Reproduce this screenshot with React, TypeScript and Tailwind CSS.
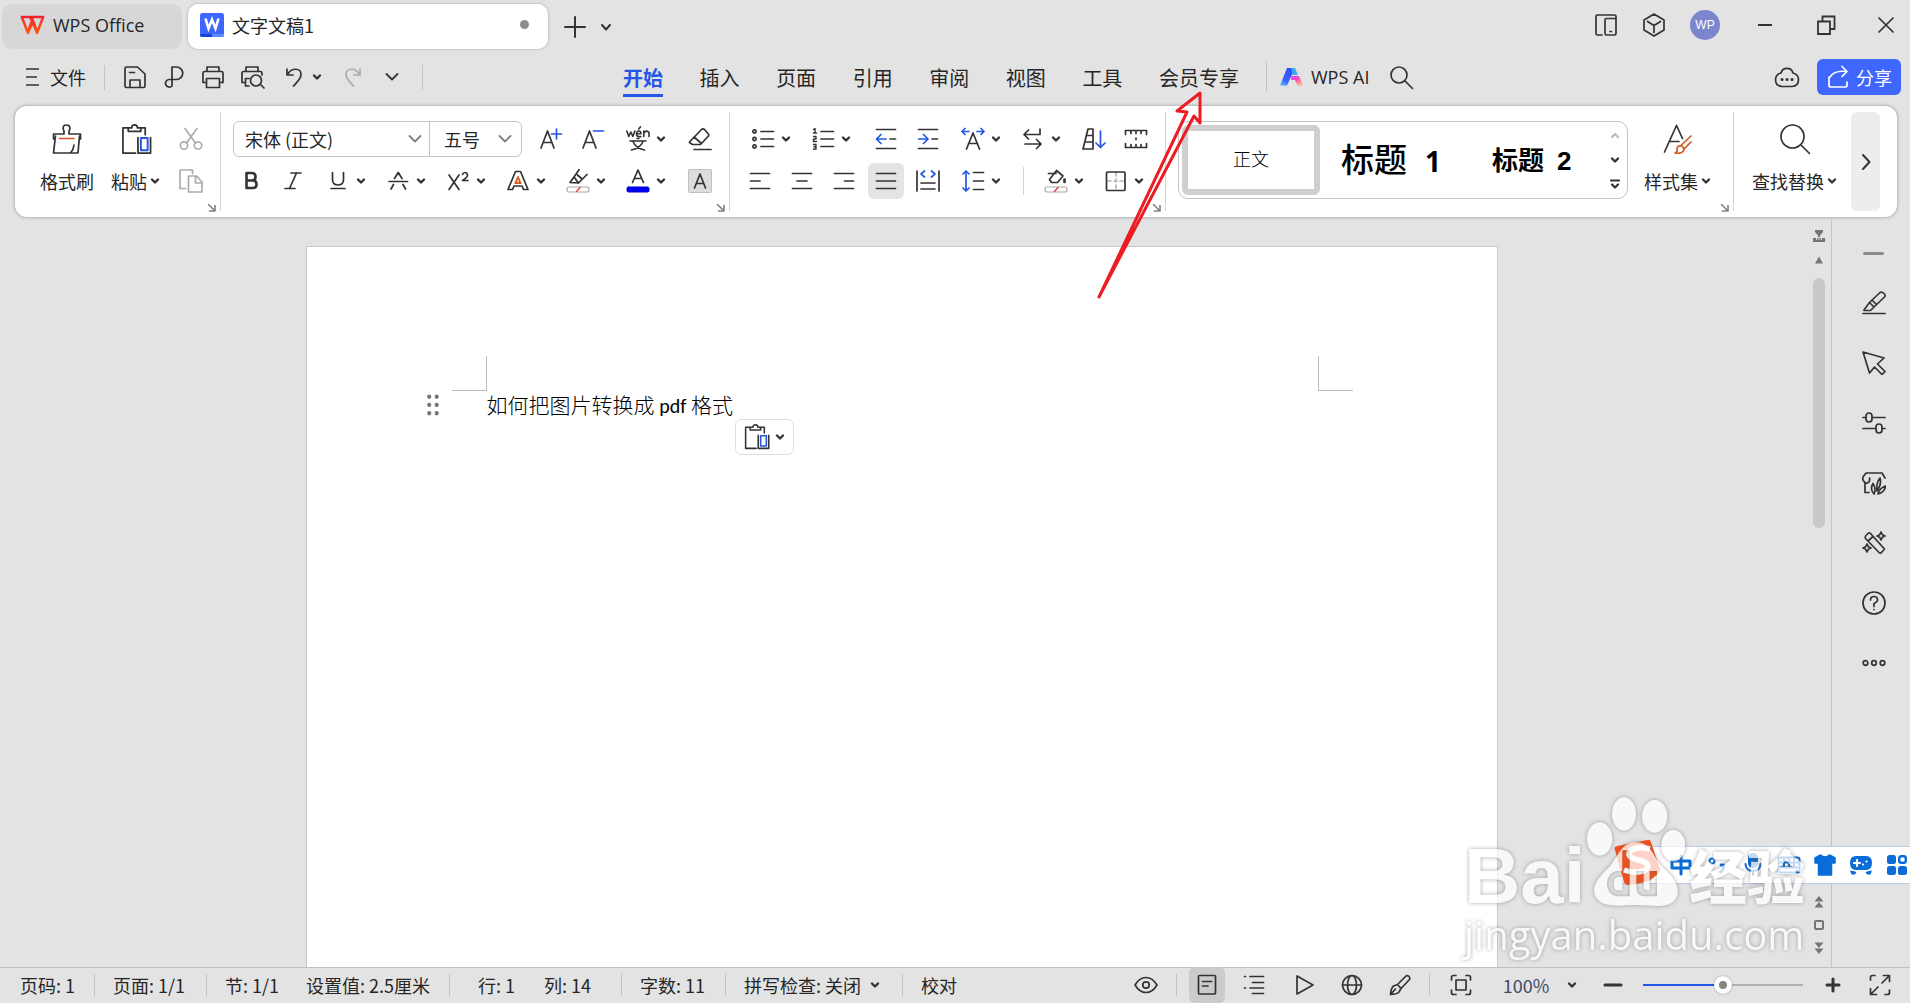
import React from "react";

type IconProps = { w?: number; h?: number; box?: string; sw?: number; color?: string; children: React.ReactNode };

/* Line icon: one unit of the view box is one pixel unless a box is given. */
function Icon({ w = 24, h = 24, box, sw = 1.7, color = "#333333", children }: IconProps) {
  return (
    <svg
      width={w}
      height={h}
      viewBox={box ?? `0 0 ${w} ${h}`}
      fill="none"
      stroke={color}
      strokeWidth={sw}
      strokeLinecap="round"
      strokeLinejoin="round"
      className="shrink-0"
      aria-hidden="true"
    >
      {children}
    </svg>
  );
}

const BLUE = "#2456e8";
const ORANGE = "#d4571b";

const Caret = () => (
  <Icon w={12} h={12} sw={2.4}>
    <path d="M3 4.5 6 7.5 9 4.5" />
  </Icon>
);

const WideChevron = ({ color = "#333333" }: { color?: string }) => (
  <Icon w={16} h={16} sw={1.8} color={color}>
    <path d="M2.5 5 8 10.5 13.5 5" />
  </Icon>
);

function Tool({ label, active, muted, children }: { label: string; active?: boolean; muted?: boolean; children: React.ReactNode }) {
  return (
    <button
      type="button"
      aria-label={label}
      className={`flex h-9 w-9 shrink-0 items-center justify-center rounded-md ${active ? "bg-[#e4e4e4]" : ""} ${muted ? "opacity-40" : ""}`}
    >
      {children}
    </button>
  );
}

function Split({ label, children }: { label: string; children: React.ReactNode }) {
  return (
    <button type="button" aria-label={label} className="flex h-9 w-[54px] shrink-0 items-center gap-[5px] pl-[9px]">
      {children}
      <Caret />
    </button>
  );
}

function Big({ label, caret, children }: { label: string; caret?: boolean; children: React.ReactNode }) {
  return (
    <button type="button" className="flex shrink-0 flex-col items-center gap-1.5 px-1.5">
      <span className="flex h-9 items-center justify-center">{children}</span>
      <span className="flex h-9 items-center gap-0.5 whitespace-nowrap text-lg">
        {label}
        {caret && <Caret />}
      </span>
    </button>
  );
}

function Group({ className, children }: { className: string; children: React.ReactNode }) {
  return (
    <div className={`flex flex-col ${className}`}>
      {children}
      <button type="button" aria-label="更多设置" className="mr-1 mt-0.5 flex h-3 items-center self-end">
        <Icon w={9} h={9} sw={1.6} color="#808080">
          <path d="M1.5 1.5 7.5 7.5M8 2.5V8H2.500" />
        </Icon>
      </button>
    </div>
  );
}

const RibbonRule = () => <div className="my-1.5 w-px shrink-0 bg-[#d4d4d4]" />;

const PasteIcon = ({ size = 31 }: { size?: number }) => (
  <Icon w={size} h={size} box="0 0 32 32" sw={size > 28 ? 1.8 : 1.9}>
    <path d="M15 30H2V4H7M21 4H25V11" />
    <path d="M7.500 7.500V4H11Q11 1 14 1T17 4H20.500V7.500Z" />
    <path d="M17.500 14V30H30.500V14" />
    <rect x="20.500" y="14.500" width="7" height="12.500" stroke={BLUE} strokeWidth="2" />
  </Icon>
);

function TitleBar() {
  return (
    <header className="flex h-[54px] shrink-0 items-start pl-0.5 pt-1">
      <button type="button" className="flex h-[45px] w-[180px] items-center gap-2 rounded-[10px] bg-[#d7d7d7] pb-3 pl-[18px] pt-2 text-lg">
        <Icon w={25} h={20} sw={2.4} color="url(#wps)">
          <defs>
            <linearGradient id="wps" x1="0" y1="0" x2="0" y2="1">
              <stop offset="0" stopColor="#f5222d" />
              <stop offset="1" stopColor="#ff5a10" />
            </linearGradient>
          </defs>
          <path d="M7 2H1.800L8 18 12.500 7 17 18 23.200 2H11.500L17 16M8 16 12 6 10 2H7" />
        </Icon>
        <span className="font-['Open_Sans']">WPS Office</span>
      </button>
      <div className="ml-1.5 flex h-[45px] w-[360px] items-center rounded-[10px] bg-white pb-3 pl-3 pr-[19px] pt-2 text-lg shadow-[0_0_3px_rgba(0,0,0,0.25)]">
        <svg width="24" height="24" viewBox="0 0 24 24" aria-hidden="true" className="shrink-0">
          <rect width="24" height="24" rx="2.500" fill="#3f67ff" />
          <path d="M0 21H12V24H2Q0 24 0 22Z" fill="#1145dd" />
          <path d="M12 21H24V22Q24 24 22 24H12Z" fill="#5e8bff" />
          <path d="M5.500 5.500 8.500 15.500 12 6.500 15.500 15.500 18.500 5.500" fill="none" stroke="#fff" strokeWidth="2.600" />
        </svg>
        <span className="ml-2 flex-1">文字文稿1</span>
        <span className="h-[9px] w-[9px] rounded-full bg-[#8c8c8c]" />
      </div>
      <div className="flex h-[45px] items-center pl-4">
        <button type="button" aria-label="新建">
          <Icon w={22} h={22} sw={2}>
            <path d="M1 11H21M11 1V21" />
          </Icon>
        </button>
        <button type="button" aria-label="标签列表" className="ml-[13px]">
          <Icon w={14} h={14} sw={2}>
            <path d="M3 5 7 9.500 11 5" />
          </Icon>
        </button>
      </div>
      <div className="ml-auto flex h-[42px] items-center pr-4">
        <button type="button" aria-label="多屏">
          <Icon w={24} h={24}>
            <path d="M8 22H3.500Q2 22 2 20.500V3.500Q2 2 3.500 2H20.500Q22 2 22 3.500V6" />
            <rect x="11" y="5.500" width="11" height="16.500" rx="1.500" />
            <path d="M16 18.500H17.500" />
          </Icon>
        </button>
        <button type="button" aria-label="应用" className="ml-6">
          <Icon w={24} h={24}>
            <path d="M12 1 22 7V17L12 23 2 17V7ZM5.500 8.500 12 12.500 18.500 8.500M12 12.500V19.500" />
          </Icon>
        </button>
        <button type="button" className="ml-6 h-[30px] w-[30px] rounded-full bg-[#7c86cf] text-center font-['Liberation_Sans'] text-xs text-white">WP</button>
        <button type="button" aria-label="最小化" className="ml-[37px]">
          <Icon w={16} h={16} sw={2}>
            <path d="M1 8H15" strokeLinecap="butt" />
          </Icon>
        </button>
        <button type="button" aria-label="还原" className="ml-[43px]">
          <Icon w={20} h={20} sw={1.8}>
            <path d="M2 6.500H14V19H2ZM6.500 6V1.500H18.500V14H14.500" strokeLinejoin="miter" />
          </Icon>
        </button>
        <button type="button" aria-label="关闭" className="ml-[42px]">
          <Icon w={16} h={16} sw={1.7}>
            <path d="M1 1 15 15M15 1 1 15" />
          </Icon>
        </button>
      </div>
    </header>
  );
}

const MENU = ["开始", "插入", "页面", "引用", "审阅", "视图", "工具", "会员专享"];

function MenuBar() {
  return (
    <div className="flex h-[52px] shrink-0 items-start pl-6 pr-[9px]">
      <div className="flex h-[46px] w-[599px] shrink-0 items-center">
        <button type="button" className="flex items-center gap-2.5 text-lg">
          <Icon w={16} h={20}>
            <path d="M2 2H15M2 10H13M2 18H15" strokeLinecap="butt" />
          </Icon>
          文件
        </button>
        <div className="ml-[18px] h-[25px] w-px bg-[#c4c4c4]" />
        <button type="button" aria-label="保存" className="ml-[18px]">
          <Icon w={24} h={24}>
            <path d="M7 22.500H3.500Q2 22.500 2 21V3.500Q2 2 3.500 2H14.500L22 9V21Q22 22.500 20.500 22.500H7V15H17V22.500M6.500 7.500H11.500" />
          </Icon>
        </button>
        <button type="button" aria-label="输出" className="ml-4">
          <Icon w={22} h={24}>
            <path d="M9 21V2H13.500A6 6 0 0 1 13.500 14.500H6.500A3.800 3.800 0 1 0 9 21" />
          </Icon>
        </button>
        <button type="button" aria-label="打印" className="ml-4">
          <Icon w={24} h={24}>
            <path d="M6 6V2H18V6M5 17.500H2V8Q2 6.500 3.500 6.500H20.500Q22 6.500 22 8V17.500H19M5.500 13.500H18.500V22.500H5.500Z" />
          </Icon>
        </button>
        <button type="button" aria-label="打印预览" className="ml-[15px]">
          <Icon w={26} h={24}>
            <path d="M6 6V2H18V6M5 17.500H2V8Q2 6.500 3.500 6.500H20.500Q22 6.500 22 8V10M9 13.500H5.500V21H9M20.500 19.500 24 23" />
            <circle cx="16" cy="15.500" r="5.500" />
          </Icon>
        </button>
        <button type="button" aria-label="撤销" className="ml-[19px] flex items-center gap-2">
          <Icon w={18} h={22}>
            <path d="M2 3V9H8M2.500 8.500C6 1.500 16 1.500 16 8.500 16 13 12 16 8.500 20" />
          </Icon>
          <Caret />
        </button>
        <button type="button" aria-label="恢复" className="ml-[21px]">
          <Icon w={18} h={22} color="#ababab">
            <path d="M16 3V9H10M15.500 8.500C12 1.500 2 1.500 2 8.500 2 13 6 16 9.500 20" />
          </Icon>
        </button>
        <button type="button" aria-label="更多快捷命令" className="ml-[22px]">
          <WideChevron />
        </button>
        <div className="ml-[22px] h-[25px] w-px bg-[#c4c4c4]" />
      </div>
      <nav className="flex h-[46px] w-[616px] shrink-0 items-center justify-between text-xl">
        {MENU.map((name, i) => (
          <a
            key={name}
            href="#"
            className={`border-b-[3px] pt-1 leading-8 ${i === 0 ? "border-[#2456e8] font-bold text-[#2456e8]" : "border-transparent"}`}
          >
            {name}
          </a>
        ))}
      </nav>
      <div className="flex h-[46px] items-center pl-[27px]">
        <div className="h-[30px] w-px bg-[#c4c4c4]" />
        <button type="button" className="ml-3 flex items-center gap-[7px] text-lg">
          <svg width="25" height="20" viewBox="0 0 25 20" aria-hidden="true">
            <defs>
              <linearGradient id="aiA" x1="0.600" y1="0" x2="0" y2="1">
                <stop offset="0" stopColor="#2f4bff" />
                <stop offset="0.600" stopColor="#3b62ff" />
                <stop offset="1" stopColor="#58c6f5" />
              </linearGradient>
              <linearGradient id="aiB" x1="0" y1="0" x2="0.600" y2="1">
                <stop offset="0" stopColor="#d93bff" />
                <stop offset="0.500" stopColor="#ff4fb0" />
                <stop offset="1" stopColor="#ffb287" />
              </linearGradient>
            </defs>
            <path d="M8 1H16L8 18.500H1Z" fill="url(#aiA)" />
            <path d="M12 1H16L19 8H13.500Z" fill="#3aa6ff" />
            <path d="M12.500 9H20L24 18.500H18.500L16 13H12Z" fill="url(#aiB)" />
          </svg>
          <span className="font-['Open_Sans']">WPS AI</span>
        </button>
        <button type="button" aria-label="搜索" className="ml-5">
          <Icon w={25} h={25}>
            <circle cx="10" cy="10" r="8" />
            <path d="M16 16 23.500 23.500" />
          </Icon>
        </button>
      </div>
      <div className="ml-auto flex h-[46px] items-center">
        <button type="button" aria-label="云同步">
          <Icon w={26} h={24}>
            <path d="M7 8A6.200 6.200 0 0 1 19 8 7 7 0 0 1 24.500 14.500Q24.500 21 18 21.500H8Q1.500 21 1.500 14.500A7 7 0 0 1 7 8Z" />
            <path d="M8 14.500H8.100M13 14.500H13.100M18 14.500H18.100" strokeWidth="3" />
          </Icon>
        </button>
        <button type="button" className="ml-[17px] flex h-9 w-[84px] items-center justify-center gap-1.5 rounded-md bg-[#3f67ff] text-lg text-white">
          <Icon w={24} h={24} color="#ffffff">
            <path d="M3 12V20Q3 22 5 22H19Q21 22 21 20V17M4 12C7 7 12 5.500 21 6.500M16 1.500 21 6.500 16 11.500" />
          </Icon>
          分享
        </button>
      </div>
    </div>
  );
}

function FontGroup() {
  return (
    <Group className="w-[508px] shrink-0 pl-3 pt-[15px]">
      <div className="flex items-center gap-1.5">
        <div className="mr-[5px] flex h-9 w-[289px] rounded-md border border-[#c4c4c4] text-lg">
          <label className="relative flex w-[196px] items-center border-r border-[#c4c4c4]">
            <select aria-label="字体" className="h-full w-full appearance-none bg-transparent pl-[11px]">
              <option>宋体 (正文)</option>
            </select>
            <span className="pointer-events-none absolute right-1.5">
              <WideChevron color="#808080" />
            </span>
          </label>
          <label className="relative flex flex-1 items-center">
            <select aria-label="字号" className="h-full w-full appearance-none bg-transparent pl-3.5">
              <option>五号</option>
            </select>
            <span className="pointer-events-none absolute right-2">
              <WideChevron color="#808080" />
            </span>
          </label>
        </div>
        <Tool label="增大字号">
          <Icon>
            <path d="M2 21 8.500 4 15 21M4.200 15.500H12.800" />
            <path d="M12.500 7H22.500M17.500 2V12" stroke={BLUE} />
          </Icon>
        </Tool>
        <Tool label="减小字号">
          <Icon>
            <path d="M2 21 8.500 4 15 21M4.200 15.500H12.800" />
            <path d="M12.500 4H22.500" stroke={BLUE} />
          </Icon>
        </Tool>
        <Split label="拼音指南">
          <Icon h={26} sw={1.6}>
            <path d="M.8 5 2.800 10.500 4.800 6 6.800 10.500 8.800 5M10.500 7.800H15Q15 5 12.800 5T10.500 7.800 13 10.600H14.800M12.800 3 14.500.8M17.800 10.500V5M17.800 7Q20.500 3.500 23 6.500V10.500" />
            <path d="M4 15H20M11 12.500H13M7 15.500Q9.500 22 18.500 24M17 15.500Q14.500 22 5.500 24" />
          </Icon>
        </Split>
        <div className="ml-[5px]">
          <Tool label="清除格式">
            <Icon>
              <path d="M1.500 15 13.500 2.500Q15 1.300 16.500 2.500L20 6.500Q21.500 8 20 9.500L12.500 17.500H4.500L1.500 15.500ZM6 10 13.500 16.500M6 22.500H23" />
            </Icon>
          </Tool>
        </div>
      </div>
      <div className="mt-1.5 flex items-center gap-1.5">
        <Tool label="加粗">
          <Icon sw={2.6}>
            <path d="M7.500 4H13Q16.500 4 16.500 7.700 16.500 11.500 13 11.500H7.500ZM7.500 11.500H14Q17.500 11.500 17.500 15.500 17.500 19 14 19H7.500Z" />
          </Icon>
        </Tool>
        <Tool label="倾斜">
          <Icon>
            <path d="M10 4H20M4 19.500H14M15.500 4 8.500 19.500" />
          </Icon>
        </Tool>
        <Split label="下划线">
          <Icon>
            <path d="M6.500 3.500V10.500Q6.500 16 12 16T17.500 10.500V3.500M5 19.500H19" />
          </Icon>
        </Split>
        <Split label="删除线">
          <Icon>
            <path d="M3 12.500H21.500M8.500 9.500 12.200 3.500 16 9.500M7.500 15.500 5 20M17 15.500 19.500 20" />
          </Icon>
        </Split>
        <Split label="上标">
          <Icon>
            <path d="M3 6 13 20.500M13 6 3 20.500" />
            <path d="M16.500 5.500Q17 3.500 19 3.500T21.500 5.800 16.500 11.500H22" />
          </Icon>
        </Split>
        <Split label="文字效果">
          <Icon>
            <path d="M2 20.500 9.500 2.500H14.500L22 20.500H17.500L16 17H8L6.500 20.500Z" />
            <path d="M9 14.500 12 7.500 15 14.500Z" fill={ORANGE} stroke={ORANGE} strokeWidth="1.200" />
            <path d="M12 11V13" stroke="#fff" strokeWidth="1.200" />
          </Icon>
        </Split>
        <Split label="突出显示">
          <Icon>
            <path d="M13 .8 8 8 4 13.500 12.500 14 21 5.500M8 8 12.500 14M11.500 6 16 10" />
            <rect x="1" y="18" width="22" height="5" rx="2" stroke="#aaa" strokeWidth="1.200" />
            <path d="M10.500 22.500 14 18.500" stroke="#e33" strokeWidth="1.300" />
          </Icon>
        </Split>
        <Split label="字体颜色">
          <Icon>
            <path d="M6.500 13.500 12 1 17.500 13.500M8.500 9.500H15.500" />
            <rect x="1" y="18" width="22" height="5" rx="1.500" fill="#0000f5" stroke="#0000d0" strokeWidth="1" />
          </Icon>
        </Split>
        <div className="ml-[5px]">
          <Tool label="字符底纹">
            <Icon>
              <rect x=".5" y=".5" width="23" height="23" rx="1" fill="#dcdcdc" stroke="#c0c0c0" strokeWidth="1" />
              <path d="M6.500 19 12 5 17.500 19M8.500 14.500H15.500" />
            </Icon>
          </Tool>
        </div>
      </div>
    </Group>
  );
}

function ParagraphGroup() {
  return (
    <Group className="w-[435px] shrink-0 pl-3 pt-[15px]">
      <div className="flex items-center gap-1.5">
        <Split label="项目符号">
          <Icon>
            <path d="M10 4.500H22.500M10 12H22.500M10 19.500H22.500" />
            <circle cx="3.500" cy="4.500" r="1.600" />
            <circle cx="3.500" cy="12" r="1.600" />
            <circle cx="3.500" cy="19.500" r="1.600" />
          </Icon>
        </Split>
        <Split label="编号">
          <Icon>
            <path d="M10 4.500H22.500M10 12H22.500M10 19.500H22.500" />
            <path d="M2.500 2.500 4 1.500V6M2.500 6H5.500M2.500 9.500H5V12H2.500V14.500H5.500M2.500 17.500H5V22H2.500M3 19.800H5" strokeWidth="1.400" />
          </Icon>
        </Split>
        <div className="ml-1.5">
          <Tool label="减少缩进">
            <Icon>
              <path d="M2.500 2.500H21.500M16 12H21.500M2.500 21.500H21.500" />
              <path d="M12 12H2.500M7 7.500 2.500 12 7 16.500" stroke={BLUE} />
            </Icon>
          </Tool>
        </div>
        <Tool label="增加缩进">
          <Icon>
            <path d="M2.500 2.500H21.500M16 12H21.500M2.500 21.500H21.500" />
            <path d="M2.500 12H12M7.500 7.500 12 12 7.500 16.500" stroke={BLUE} />
          </Icon>
        </Tool>
        <Split label="字符缩放">
          <Icon>
            <path d="M5.500 22 12 6 18.500 22M7.500 16.500H16.500" />
            <path d="M8 4.500H1M4 1.500 1 4.500 4 7.500M16 4.500H23M20 1.500 23 4.500 20 7.500" stroke={BLUE} />
          </Icon>
        </Split>
        <Split label="换行">
          <Icon>
            <path d="M19 2V7.500H3M7.500 3 3 7.500 7.500 12M4 17H20M15.500 12.500 20 17 15.500 21.500" />
          </Icon>
        </Split>
        <div className="ml-1">
          <Tool label="排序">
            <Icon>
              <path d="M1 22 6 2H11V22ZM4.500 8.500H11M3 15H11" />
              <path d="M18.500 4V20.500M14 16 18.500 20.500 23 16" stroke={BLUE} />
            </Icon>
          </Tool>
        </div>
        <Tool label="显示标尺">
          <Icon>
            <path d="M1.500 7.500V3.500H22.500V7.500M7 4V6.500M12 4V6.500M17 4V6.500M1.500 16.500V20.500H22.500V16.500M7 20V17.500M12 20V17.500M17 20V17.500M12 11V12.500" />
          </Icon>
        </Tool>
      </div>
      <div className="mt-1.5 flex items-center gap-1.5">
        <Tool label="左对齐">
          <Icon>
            <path d="M2.500 4.500H21.500M2.500 12H12M2.500 19.500H21.500" />
          </Icon>
        </Tool>
        <Tool label="居中">
          <Icon>
            <path d="M2.500 4.500H21.500M7 12H17M2.500 19.500H21.500" />
          </Icon>
        </Tool>
        <Tool label="右对齐">
          <Icon>
            <path d="M2.500 4.500H21.500M12.500 12H21.500M2.500 19.500H21.500" />
          </Icon>
        </Tool>
        <Tool label="两端对齐" active>
          <Icon>
            <path d="M2.500 4.500H21.500M2.500 12H21.500M2.500 19.500H21.500" />
          </Icon>
        </Tool>
        <Tool label="分散对齐">
          <Icon>
            <path d="M1 2V22M23 2V22M5 14H19M5 20H19" />
            <path d="M8.500 2 5 5 8.500 8M15.500 2 19 5 15.500 8" stroke={BLUE} />
          </Icon>
        </Tool>
        <Split label="行距">
          <Icon>
            <path d="M12.500 3.500H22.500M12.500 12H22.500M12.500 20.500H22.500" />
            <path d="M5 2V22M2 5 5 2 8 5M2 19 5 22 8 19" stroke={BLUE} />
          </Icon>
        </Split>
        <div className="ml-[11px] mr-[5px] h-7 w-px bg-[#d4d4d4]" />
        <Split label="底纹颜色">
          <Icon>
            <path d="M4.500 4.500H12M5.500 10.500 12.500 1.500 19 7 13.500 13.500H7.500ZM10 4.500 13 2" />
            <path d="M20.500 10.500V13" strokeWidth="2.600" />
            <rect x="1" y="18" width="22" height="5" rx="2" stroke="#aaa" strokeWidth="1.200" />
            <path d="M10.500 22.500 14 18.500" stroke="#e33" strokeWidth="1.300" />
          </Icon>
        </Split>
        <Split label="边框">
          <Icon>
            <path d="M12 4V20M4 12H20" stroke="#b5b5b5" strokeDasharray="3 3" />
            <rect x="2.500" y="3" width="18.500" height="18.500" rx="1" />
          </Icon>
        </Split>
      </div>
    </Group>
  );
}

function StylesGroup() {
  return (
    <Group className="min-w-0 flex-1 pl-3 pt-[15px]">
      <div className="flex min-w-0 gap-2.5">
        <div className="flex h-[78px] min-w-0 flex-1 items-center rounded-[10px] border border-[#c4c4c4] pl-[3px] pr-1">
          <button type="button" className="h-[70px] w-[138px] shrink-0 rounded-md border-[6px] border-[#cfcfcf] pb-1 text-lg font-light text-black">
            正文
          </button>
          <button type="button" className="ml-[21px] flex shrink-0 items-baseline gap-[18px] font-bold text-black">
            <span className="text-[33px] font-medium leading-10">标题</span>
            <span className="font-['Open_Sans'] text-[28px]">1</span>
          </button>
          <button type="button" className="ml-[51px] flex shrink-0 items-baseline gap-[13px] text-[26px] font-bold text-black">
            <span className="leading-10">标题</span>
            <span className="font-['Liberation_Sans']">2</span>
          </button>
          <div className="ml-auto flex h-full flex-col items-center justify-between py-2">
            <button type="button" aria-label="上一行">
              <Icon w={16} h={12} sw={2.2} color="#bdbdbd">
                <path d="M5 7 8 4 11 7" />
              </Icon>
            </button>
            <button type="button" aria-label="下一行">
              <Icon w={16} h={12} sw={2.4}>
                <path d="M5 4.500 8 7.500 11 4.500" />
              </Icon>
            </button>
            <button type="button" aria-label="展开样式">
              <Icon w={16} h={12} sw={2.2}>
                <path d="M4 2.500H12M5 6.500 8 9.500 11 6.500" />
              </Icon>
            </button>
          </div>
        </div>
        <div className="mr-[15px]">
          <Big label="样式集" caret>
            <Icon w={30} h={30}>
              <path d="M1.500 28 13.500 1.500 19.500 14.500M6.500 17.500H16" />
              <path d="M12 29Q15 28 14 25 14.500 21 18.500 22 22 24 20.500 27 18 30 12 29ZM18 21.500 28 12M21.500 24.500 28 18" stroke={ORANGE} />
            </Icon>
          </Big>
        </div>
      </div>
    </Group>
  );
}

function Ribbon() {
  return (
    <section className="ml-[15px] mr-[13px] flex h-[111px] shrink-0 rounded-xl bg-white shadow-[0_0_3px_1px_rgba(0,0,0,0.22)]">
      <Group className="w-[205px] shrink-0 pl-[19px] pt-[15px]">
        <div className="flex">
          <Big label="格式刷">
            <Icon w={30} h={32}>
              <path d="M3.500 13 1.500 30H26L27.500 13M1.500 16V11H12Q12.500 8 11 5.500 11 2 14.500 2T18 5.500Q16.500 8 17 11H28.500V16M22 22Q21.500 27 18.500 30" />
              <path d="M7.500 15.500H22" stroke={ORANGE} />
            </Icon>
          </Big>
          <div className="ml-[5px]">
            <Big label="粘贴" caret>
              <PasteIcon />
            </Big>
          </div>
          <div className="ml-1.5 flex flex-col gap-1.5">
            <Tool label="剪切" muted>
              <Icon>
                <path d="M6 1.500 16.500 16M18 1.500 7.500 16" />
                <circle cx="5" cy="18.500" r="3.700" />
                <circle cx="19" cy="18.500" r="3.700" />
              </Icon>
            </Tool>
            <Tool label="复制" muted>
              <Icon>
                <path d="M6.500 19.500H1V1H13.500V4.500M9.500 7H17.500L23 13V23H9.500ZM16.500 7.500V14H23" />
              </Icon>
            </Tool>
          </div>
        </div>
      </Group>
      <RibbonRule />
      <FontGroup />
      <RibbonRule />
      <ParagraphGroup />
      <RibbonRule />
      <StylesGroup />
      <RibbonRule />
      <div className="flex shrink-0 items-start pl-3 pt-[15px]">
        <Big label="查找替换" caret>
          <Icon w={32} h={32}>
            <circle cx="13.500" cy="13.500" r="11.500" />
            <path d="M22 22 30.500 30.500" />
          </Icon>
        </Big>
      </div>
      <button type="button" aria-label="向右滚动" className="my-1.5 ml-[7px] mr-[17px] flex w-[29px] shrink-0 items-center justify-center rounded-md bg-[#ededed]">
        <Icon w={12} h={18} sw={2}>
          <path d="M3 2 9.500 9 3 16" />
        </Icon>
      </button>
    </section>
  );
}

const CropMark = ({ side }: { side: "left" | "right" }) => (
  <div className={`h-[35px] w-[35px] border-b border-[#bdbdbd] ${side === "left" ? "border-r" : "border-l"}`} />
);

function DocumentPage() {
  return (
    <article className="mx-auto w-[1192px] border border-b-0 border-[#c8c8c8] bg-white pt-[109px]">
      <div className="flex justify-between pl-[145px] pr-[144px]">
        <CropMark side="left" />
        <CropMark side="right" />
      </div>
      <div className="mt-[-2px] flex items-center pl-[119px] text-[21px] leading-[30px] text-black">
        <Icon w={14} h={22} sw={4.2} color="#757575">
          <path d="M3.200 2.800V2.700M3.200 11V10.900M3.200 19.300V19.200M10.700 2.800V2.700M10.700 11V10.900M10.700 19.300V19.200" />
        </Icon>
        <p className="ml-[47px] font-light">
          如何把图片转换成 <span className="font-['Carlito','Open_Sans'] text-xl font-normal">pdf</span> 格式
        </p>
      </div>
      <button type="button" aria-label="粘贴选项" className="ml-[428px] mt-[-1px] flex h-9 w-[59px] items-center gap-1 rounded-md border border-[#dedede] bg-white pl-2">
        <PasteIcon size={26} />
        <Caret />
      </button>
    </article>
  );
}

function ScrollRail() {
  return (
    <div className="flex w-[25px] shrink-0 flex-col items-center border-r border-[#c4c4c4] pb-[13px] pt-3">
      <svg width="14" height="14" viewBox="0 0 14 14" fill="#757575" aria-hidden="true">
        <path d="M3 1H11V3L8 6.500V8H6V6.500L3 3ZM1 9H13V13H1Z" />
        <path d="M4.500 9V11M7 8V11M9.500 9V11" stroke="#e3e3e3" />
      </svg>
      <svg width="12" height="10" viewBox="0 0 12 10" fill="#757575" className="mt-3" aria-hidden="true">
        <path d="M6 1.500 10 8.500H2Z" />
      </svg>
      <div className="mt-[13px] h-[250px] w-3 rounded-full bg-[#c9c9c9]" />
      <div className="mt-auto flex flex-col items-center gap-3">
        <svg width="12" height="12" viewBox="0 0 12 12" fill="#757575" aria-hidden="true">
          <path d="M6 0 10.500 5.500H1.500ZM6 6 10.500 11.500H1.500Z" />
        </svg>
        <span className="h-2.5 w-2.5 rounded-[2px] border-2 border-[#757575]" />
        <svg width="12" height="12" viewBox="0 0 12 12" fill="#757575" aria-hidden="true">
          <path d="M6 6 10.500.5H1.500ZM6 12 10.500 6.500H1.500Z" />
        </svg>
      </div>
    </div>
  );
}

function SidePanel() {
  return (
    <aside className="flex w-[78px] shrink-0 flex-col items-center gap-9 pl-[5px] pt-[35px]">
      <div className="h-[3px] w-[21px] rounded-full bg-[#8c8c8c]" />
      <button type="button" aria-label="高亮笔">
        <Icon>
          <path d="M1 22.500H23M2 19 7.500 11.500 18 1.500Q20 .5 22 2.500T22.500 6L12 16 8.500 19.500H2M7.500 11.500 12 16M10 9 14 13" />
        </Icon>
      </button>
      <button type="button" aria-label="选择">
        <Icon>
          <path d="M1 1 22 7 15.500 13 23 20.500 20 23.500 12.500 16 7.500 22Z" />
        </Icon>
      </button>
      <button type="button" aria-label="设置">
        <Icon>
          <path d="M1 6.500H4M10 6.500H23M1 17.500H14M20 17.500H23" />
          <rect x="4" y="2" width="6" height="9" rx="3" />
          <rect x="14" y="13" width="6" height="9" rx="3" />
        </Icon>
      </button>
      <button type="button" aria-label="素材">
        <Icon>
          <path d="M7 21.500H3V11.500Q0 9 1 6L4 2H20L23 7M7.500 7Q8.500 12 3 12.500" />
          <path d="M12 23Q7.500 18 11 12.500 14.500 18 12 23ZM15 20Q14 12 18 7 20 13 15 20ZM16 23Q17 17.500 23.500 15 23 21 16 23Z" />
        </Icon>
      </button>
      <button type="button" aria-label="美化">
        <Icon>
          <path d="M4 4.500 6.500 2Q7.500 1.500 8.500 2.500L22.500 18 19 22Q18 22.500 17 21.500L3.500 7.500Q2.500 6 4 4.500M6 10 11 5.500" />
          <path d="M19 1 20.300 3.700 23 5 20.300 6.300 19 9 17.700 6.300 15 5 17.700 3.700ZM5 13 6.300 15.700 9 17 6.300 18.300 5 21 3.700 18.300 1 17 3.700 15.700Z" />
        </Icon>
      </button>
      <button type="button" aria-label="帮助">
        <Icon>
          <circle cx="12" cy="12" r="11" />
          <path d="M8.500 9Q8.500 5.500 12 5.500T15.500 9Q15.500 11 12 12.500V15.500M12 18.500V18.600" />
        </Icon>
      </button>
      <button type="button" aria-label="更多">
        <Icon>
          <circle cx="3.500" cy="12" r="2.300" />
          <circle cx="12" cy="12" r="2.300" />
          <circle cx="20.500" cy="12" r="2.300" />
        </Icon>
      </button>
    </aside>
  );
}

const StatusRule = () => <div className="h-[22px] w-px shrink-0 bg-[#c4c4c4]" />;

function StatusBar() {
  return (
    <footer className="flex h-9 shrink-0 items-center border-t border-[#c0c0c0] pb-0.5 pr-[18px] text-lg whitespace-nowrap">
      <span className="w-[94px] shrink-0 pl-5">页码: 1</span>
      <StatusRule />
      <span className="w-[111px] shrink-0 pl-[18px]">页面: 1/1</span>
      <StatusRule />
      <span className="w-[99px] shrink-0 pl-[18px]">节: 1/1</span>
      <span className="w-[143px] shrink-0">设置值: 2.5厘米</span>
      <StatusRule />
      <span className="w-[94px] shrink-0 pl-7">行: 1</span>
      <span className="w-[77px] shrink-0">列: 14</span>
      <StatusRule />
      <span className="w-[103px] shrink-0 pl-[18px]">字数: 11</span>
      <StatusRule />
      <button type="button" className="flex w-[176px] shrink-0 items-center gap-2 pl-[18px]">
        拼写检查: 关闭
        <Caret />
      </button>
      <StatusRule />
      <button type="button" className="ml-[18px]">校对</button>

      <div className="ml-auto flex h-full items-center">
        <button type="button" aria-label="护眼模式">
          <Icon>
            <path d="M1 12Q5.500 4.500 12 4.500T23 12Q18.500 19.500 12 19.500T1 12Z" />
            <circle cx="12" cy="12" r="3.200" />
          </Icon>
        </button>
        <div className="ml-[18px]">
          <StatusRule />
        </div>
        <div className="ml-3 rounded-md bg-[#cbcbcb]">
          <Tool label="页面视图">
            <Icon>
              <rect x="3.500" y="2.500" width="17" height="18.500" rx="1" />
              <path d="M7.500 8.500H16.500M7.500 13H13" />
            </Icon>
          </Tool>
        </div>
        <button type="button" aria-label="大纲" className="ml-[17px]">
          <Icon>
            <path d="M8 3.500H21.500M10.500 9.500H21.500M8 15H21.500M10.500 20.500H21.500M2.500 3.500H3.500M2.500 15H3.500" />
          </Icon>
        </button>
        <button type="button" aria-label="阅读" className="ml-[27px]">
          <Icon>
            <path d="M4 3V21L20 12Z" />
          </Icon>
        </button>
        <button type="button" aria-label="网页视图" className="ml-[23px]">
          <Icon>
            <circle cx="12" cy="12" r="9.500" />
            <ellipse cx="12" cy="12" rx="4.500" ry="9.500" />
            <path d="M2.500 12H21.500" />
          </Icon>
        </button>
        <button type="button" aria-label="写作模式" className="ml-6">
          <Icon>
            <path d="M2.500 21.500Q3 15 5.500 13L9.500 11.500 18 3Q19.500 2 21 3.500T21.500 6.500L13 15.500 11 19Q8.500 21.500 2.500 21.500ZM9.500 11.500 13 15.500M7.500 16 3 21" />
          </Icon>
        </button>
        <div className="ml-[17px]">
          <StatusRule />
        </div>
        <button type="button" aria-label="适应窗口" className="ml-[19px]">
          <Icon>
            <path d="M2.500 7V4.500Q2.500 2.500 4.500 2.500H7M17 2.500H19.500Q21.500 2.500 21.500 4.500V7M21.500 17V19.500Q21.500 21.500 19.500 21.500H17M7 21.500H4.500Q2.500 21.500 2.500 19.500V17" />
            <rect x="7" y="7" width="10" height="10" />
          </Icon>
        </button>
        <button type="button" className="ml-[29px] flex items-center gap-4 text-[#404a63]">
          <span className="w-12">100%</span>
          <Caret />
        </button>
        <button type="button" aria-label="缩小" className="ml-6">
          <Icon w={22} h={22} sw={3}>
            <path d="M3 11H19" />
          </Icon>
        </button>
        <input
          type="range"
          aria-label="显示比例"
          min={0}
          max={100}
          defaultValue={50}
          className="ml-[19px] h-[2px] w-40 appearance-none bg-[linear-gradient(to_right,#2456e8_50%,#b0b0b0_50%)] [&::-webkit-slider-thumb]:h-[18px] [&::-webkit-slider-thumb]:w-[18px] [&::-webkit-slider-thumb]:appearance-none [&::-webkit-slider-thumb]:rounded-full [&::-webkit-slider-thumb]:border-[5px] [&::-webkit-slider-thumb]:border-white [&::-webkit-slider-thumb]:bg-[#858585] [&::-webkit-slider-thumb]:shadow-[0_0_2px_rgba(0,0,0,0.4)]"
        />
        <button type="button" aria-label="放大" className="ml-[19px]">
          <Icon w={22} h={22} sw={3}>
            <path d="M5 11H17M11 5V17" />
          </Icon>
        </button>
        <button type="button" aria-label="全屏" className="ml-6">
          <Icon>
            <path d="M2.500 7V4.500Q2.500 2.500 4.500 2.500H7M21.500 17V19.500Q21.500 21.500 19.500 21.500H17M14 10 21 3M15.500 2.500H21.500V8.500M10 14 3 21M2.500 15.500V21.500H8.500" />
          </Icon>
        </button>
      </div>
    </footer>
  );
}

/* Floating input-method bar docked to the right edge of the screen. */
function InputMethodBar() {
  return (
    <div className="absolute bottom-[119px] right-0 flex h-[38px] items-center border-y border-[#bccbe6] bg-white pl-[47px]">
      <svg width="48" height="46" viewBox="0 0 48 46" className="absolute bottom-[-2px] left-[-9px]" aria-hidden="true">
        <path d="M2 11Q0 8 4 7L34 1Q37 0 38 3L47 30Q48 33 45 35L36 42Q26 45 15 46 12 46 11 43Z" fill="#f4511e" />
        <path d="M37 10C25 7 16 10 16 15 16 22 35 20 35 27 35 33 22 35 11 31" fill="none" stroke="#fff" strokeWidth="5.500" />
      </svg>
      <div className="flex items-center gap-3 pr-px text-[#0a6cd6]">
        <Icon w={24} h={24} sw={3} color="#0a6cd6">
          <path d="M3 8H21V15H3ZM12 3V21" />
        </Icon>
        <Icon w={24} h={24} sw={2} color="#0a6cd6">
          <circle cx="7" cy="8" r="2.500" />
          <path d="M16 12H18.500Q19 17 15.500 19" strokeWidth="3" />
        </Icon>
        <Icon w={24} h={24} sw={2} color="#0a6cd6">
          <rect x="8" y="1" width="8" height="13" rx="4" fill="#0a6cd6" />
          <path d="M4.500 11Q5 18 12 18T19.500 11M12 18V22" />
        </Icon>
        <Icon w={24} h={24} sw={2} color="#0a6cd6">
          <rect x="1.500" y="4.500" width="21" height="15" rx="2" />
          <path d="M2 9.500H22M2 14.500H22M7 5V14M12 5V14M17 5V14" />
        </Icon>
        <Icon w={24} h={24} sw={1.5} color="#0a6cd6">
          <path d="M7.500 2 2 5V10H5.500V22H18.500V10H22V5L16.500 2Q12 6 7.500 2Z" fill="#0a6cd6" />
        </Icon>
        <svg width="24" height="24" viewBox="0 0 24 24" fill="#0a6cd6" aria-hidden="true">
          <path d="M7 3H17Q23 3 23 10 23 17 17 17H7Q1 17 1 10 1 3 7 3ZM1 17.500Q4 17.500 7.500 19L6 21.500H2.500ZM23 17.500Q20 17.500 16.500 19L18 21.500H21.500Z" />
          <path d="M5 10H11M8 7V13M14 11.500H14.100M17.500 8.500H17.600" stroke="#fff" strokeWidth="2.200" strokeLinecap="round" />
        </svg>
        <svg width="24" height="24" viewBox="0 0 24 24" fill="#0a6cd6" aria-hidden="true">
          <rect x="2" y="2" width="9" height="9" rx="2.500" />
          <rect x="14.200" y="3.200" width="6.600" height="6.600" rx="2" fill="none" stroke="#0a6cd6" strokeWidth="2.400" />
          <rect x="2" y="13" width="9" height="9" rx="2.500" />
          <rect x="13" y="13" width="9" height="9" rx="2.500" />
        </svg>
      </div>
    </div>
  );
}

function Watermark() {
  return (
    <div className="pointer-events-none absolute bottom-10 right-[100px] w-[346px] text-white opacity-75 [filter:drop-shadow(0_0_2px_rgba(90,90,90,0.7))]">
      <div className="flex h-[112px] items-end whitespace-nowrap">
        <span className="w-[121px] shrink-0 font-['Liberation_Sans'] text-[78px] font-bold leading-[62px]">Bai</span>
        <div className="relative w-[100px] shrink-0">
          <svg width="100" height="112" viewBox="0 0 300 336" fill="currentColor" aria-hidden="true">
            <ellipse cx="44" cy="132" rx="38" ry="50" />
            <ellipse cx="117" cy="57" rx="36" ry="50" />
            <ellipse cx="209" cy="64" rx="38" ry="49" />
            <ellipse cx="265" cy="152" rx="36" ry="47" />
            <path
              fillRule="evenodd"
              d="M154 142C200 142 206 190 232 216 268 246 290 280 272 312 248 344 200 330 154 330 108 330 56 342 32 306 14 270 50 240 78 210 102 180 110 142 154 142ZM112 166V228H94Q66 236 66 266T94 304H134V166ZM112 246V286H98Q86 284 86 266T98 246ZM154 228V280Q156 304 180 304H216V228H194V286H184Q176 284 176 276V228Z"
            />
          </svg>
        </div>
        <span className="ml-1 text-[58px] font-black leading-[66px]">经验</span>
      </div>
      <div className="whitespace-nowrap font-['Open_Sans'] text-[40px] leading-[56px]">jingyan.baidu.com</div>
    </div>
  );
}

/* Hand-drawn pointer to the last menu entry. */
function PointerArrow() {
  return (
    <svg width="106" height="210" viewBox="0 0 106 210" fill="none" className="pointer-events-none absolute left-[1096px] top-[90px]" aria-hidden="true">
      <path d="M3 207 91 22 81 21 104 3V33L98 26Z" stroke="#ed1c24" strokeWidth="3" strokeLinejoin="round" />
    </svg>
  );
}

export default function App() {
  return (
    <div className="relative flex h-screen flex-col overflow-hidden bg-[#e3e3e3] font-['Noto_Sans_CJK_SC',sans-serif] text-[#262626]">
      <TitleBar />
      <MenuBar />
      <Ribbon />
      <main className="flex min-h-0 flex-1">
        <div className="flex min-w-0 flex-1 items-stretch overflow-hidden pr-1 pt-[29px]">
          <DocumentPage />
        </div>
        <ScrollRail />
        <SidePanel />
      </main>
      <StatusBar />
      <InputMethodBar />
      <Watermark />
      <PointerArrow />
    </div>
  );
}
